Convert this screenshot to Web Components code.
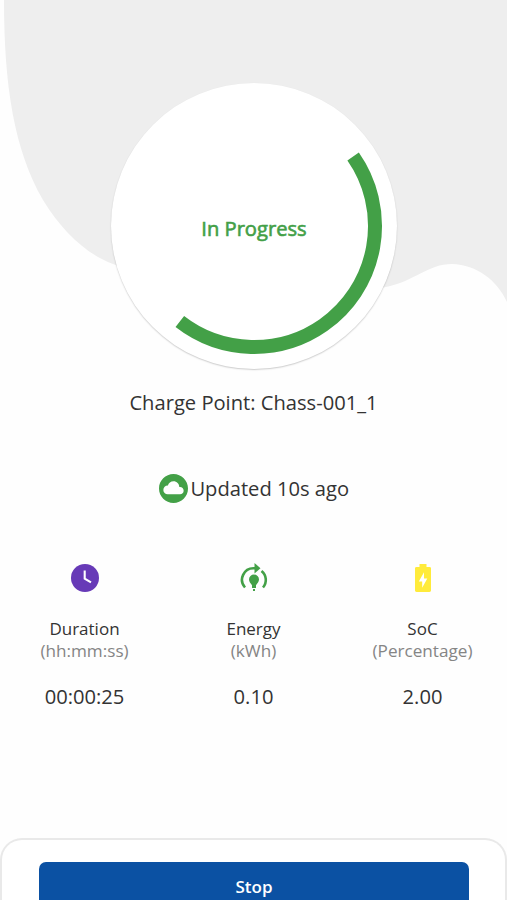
<!DOCTYPE html>
<html lang="en"><head><meta charset="utf-8"><title>Charging session</title>
<style>html,body{margin:0;height:900px;overflow:hidden;background:#fefefe}</style></head>
<body>
<charge-screen></charge-screen>
<script>
class Base extends HTMLElement{
  constructor(){super();this.attachShadow({mode:'open'}).innerHTML=this.view();}
  view(){return '';}
}
customElements.define('progress-dial',class extends Base{view(){return `
<style>
:host{display:grid;place-items:center;width:286px;height:286px;border-radius:50%;background:#fff;box-shadow:0 1px 1.500px rgba(0,0,0,.2)}
svg,span{grid-area:1/1}
span{font:20.150px/28px "Open Sans",sans-serif;color:#43a047;padding-top:4px;-webkit-text-stroke:.6px #43a047}
</style>
<svg width="286" height="286" viewBox="0 0 286 286"><circle cx="143" cy="143" r="121" pathLength="360" stroke-dasharray="162.800 197.200" transform="rotate(-35 143 143)" fill="none" stroke="#43a047" stroke-width="14"/></svg>
<span><slot></slot></span>`}});
customElements.define('sync-status',class extends Base{view(){return `
<style>:host{display:flex;align-items:center;justify-content:center;gap:2.500px;font:20.150px/28px "Open Sans",sans-serif;color:#333}svg{display:block}span{padding-bottom:1px}</style>
<svg width="29" height="29" viewBox="2 2 20 20"><path fill="#43a047" d="M12 2C6.480 2 2 6.480 2 12s4.480 10 10 10 10-4.480 10-10S17.520 2 12 2zm4.500 14H8c-1.660 0-3-1.340-3-3s1.340-3 3-3l.14.010C8.580 8.280 10.130 7 12 7c2.210 0 4 1.790 4 4h.5c1.380 0 2.500 1.120 2.500 2.500S17.880 16 16.500 16z"/></svg>
<span><slot></slot></span>`}});
customElements.define('metric-tile',class extends Base{view(){return `
<style>
:host{display:flex;flex-direction:column;align-items:center;font-family:"Open Sans",sans-serif;color:#333}
.icon{height:34px;display:grid;place-items:center}
.label{margin-top:23px;font-size:17px;line-height:22px}
.unit{font-size:17.150px;line-height:22px;color:#858585}
.value{margin-top:20px;font-size:20.150px;line-height:28px}
</style>
<div class="icon"><slot name="icon"></slot></div>
<div class="label"><slot name="label"></slot></div>
<div class="unit"><slot name="unit"></slot></div>
<div class="value"><slot></slot></div>`}});
customElements.define('action-sheet',class extends Base{view(){return `
<style>
:host{display:block;box-sizing:border-box;height:80px;border:2px solid #e9e9e9;border-bottom:0;border-radius:22px 22px 0 0;background:#fff;padding:22px 36px 0 37px}
button{display:block;width:100%;height:52px;padding:0 0 2px;border:0;border-radius:7px;background:#0b51a3;color:#fff;font:600 17px/50px "Open Sans",sans-serif}
</style><button><slot></slot></button>`}});
customElements.define('charge-screen',class extends Base{view(){return `
<style>
:host{display:grid;width:507px;height:900px;overflow:hidden;background:#fefefe}
.wave,main{grid-area:1/1}
.wave{display:block}
main{display:flex;flex-direction:column;z-index:1;min-height:0}
progress-dial{margin:83px 0 0 111px}
h1{margin:19px 0 0;text-align:center;font:20.150px/28px "Open Sans",sans-serif;color:#333}
sync-status{margin:58px 0 0 1px}
.metrics{display:grid;grid-template-columns:repeat(3,1fr);margin-top:58px}
.metrics svg{display:block}
action-sheet{margin:auto 0 -18px;flex:none}
</style>
<svg class="wave" width="507" height="320" viewBox="0 0 507 320"><path fill="#eee" d="M4 0C4 85 14 150 43 200C62 231 86 254 113 264C180 292 300 300 386 287C415 281 428 264 452 264C477 265 497 280 507 302V0Z"/></svg>
<main>
<progress-dial>In Progress</progress-dial>
<h1>Charge Point: Chass-001_1</h1>
<sync-status>Updated 10s ago</sync-status>
<section class="metrics">
<metric-tile>
<svg slot="icon" width="28" height="28" viewBox="0 0 28 28"><circle cx="14" cy="14" r="14" fill="#673ab7"/><path d="M13.700 6.500V14.700L20 18.300" fill="none" stroke="#fff" stroke-width="2.100"/></svg>
<span slot="label">Duration</span><span slot="unit">(hh:mm:ss)</span>00:00:25</metric-tile>
<metric-tile>
<svg slot="icon" width="28" height="30" viewBox="0 0 28 30"><g fill="none" stroke="#43a047" stroke-width="2.600"><path d="M5 24.500A11.500 11.500 0 0 1 14 5.300H16"/><path d="M21.500 8A11.500 11.500 0 0 1 23 24.500"/></g><path d="M14.500 .1L20.500 5.300L14.500 10.500Z" fill="#43a047"/><path fill="#43a047" d="M14 11.600A5 5 0 0 0 9 16.600C9 19 10.600 20.300 12 22.300V25H16V22.300C17.400 20.300 19 19 19 16.600A5 5 0 0 0 14 11.600ZM13 26H15V28H13Z"/></svg>
<span slot="label">Energy</span><span slot="unit">(kWh)</span>0.10</metric-tile>
<metric-tile>
<svg slot="icon" width="16" height="28" viewBox="0 0 16 29" preserveAspectRatio="none"><path fill="#ffeb3b" d="M4.500 0H11.500V3H14.500Q16 3 16 4.500V27.500Q16 29 14.500 29H1.500Q0 29 0 27.500V4.500Q0 3 1.500 3H4.500Z"/><path fill="#fff" d="M9 8.500L3.800 18H7.200V24.500L12.300 15H9Z"/></svg>
<span slot="label">SoC</span><span slot="unit">(Percentage)</span>2.00</metric-tile>
</section>
<action-sheet>Stop</action-sheet>
</main>`}});
</script></body></html>
